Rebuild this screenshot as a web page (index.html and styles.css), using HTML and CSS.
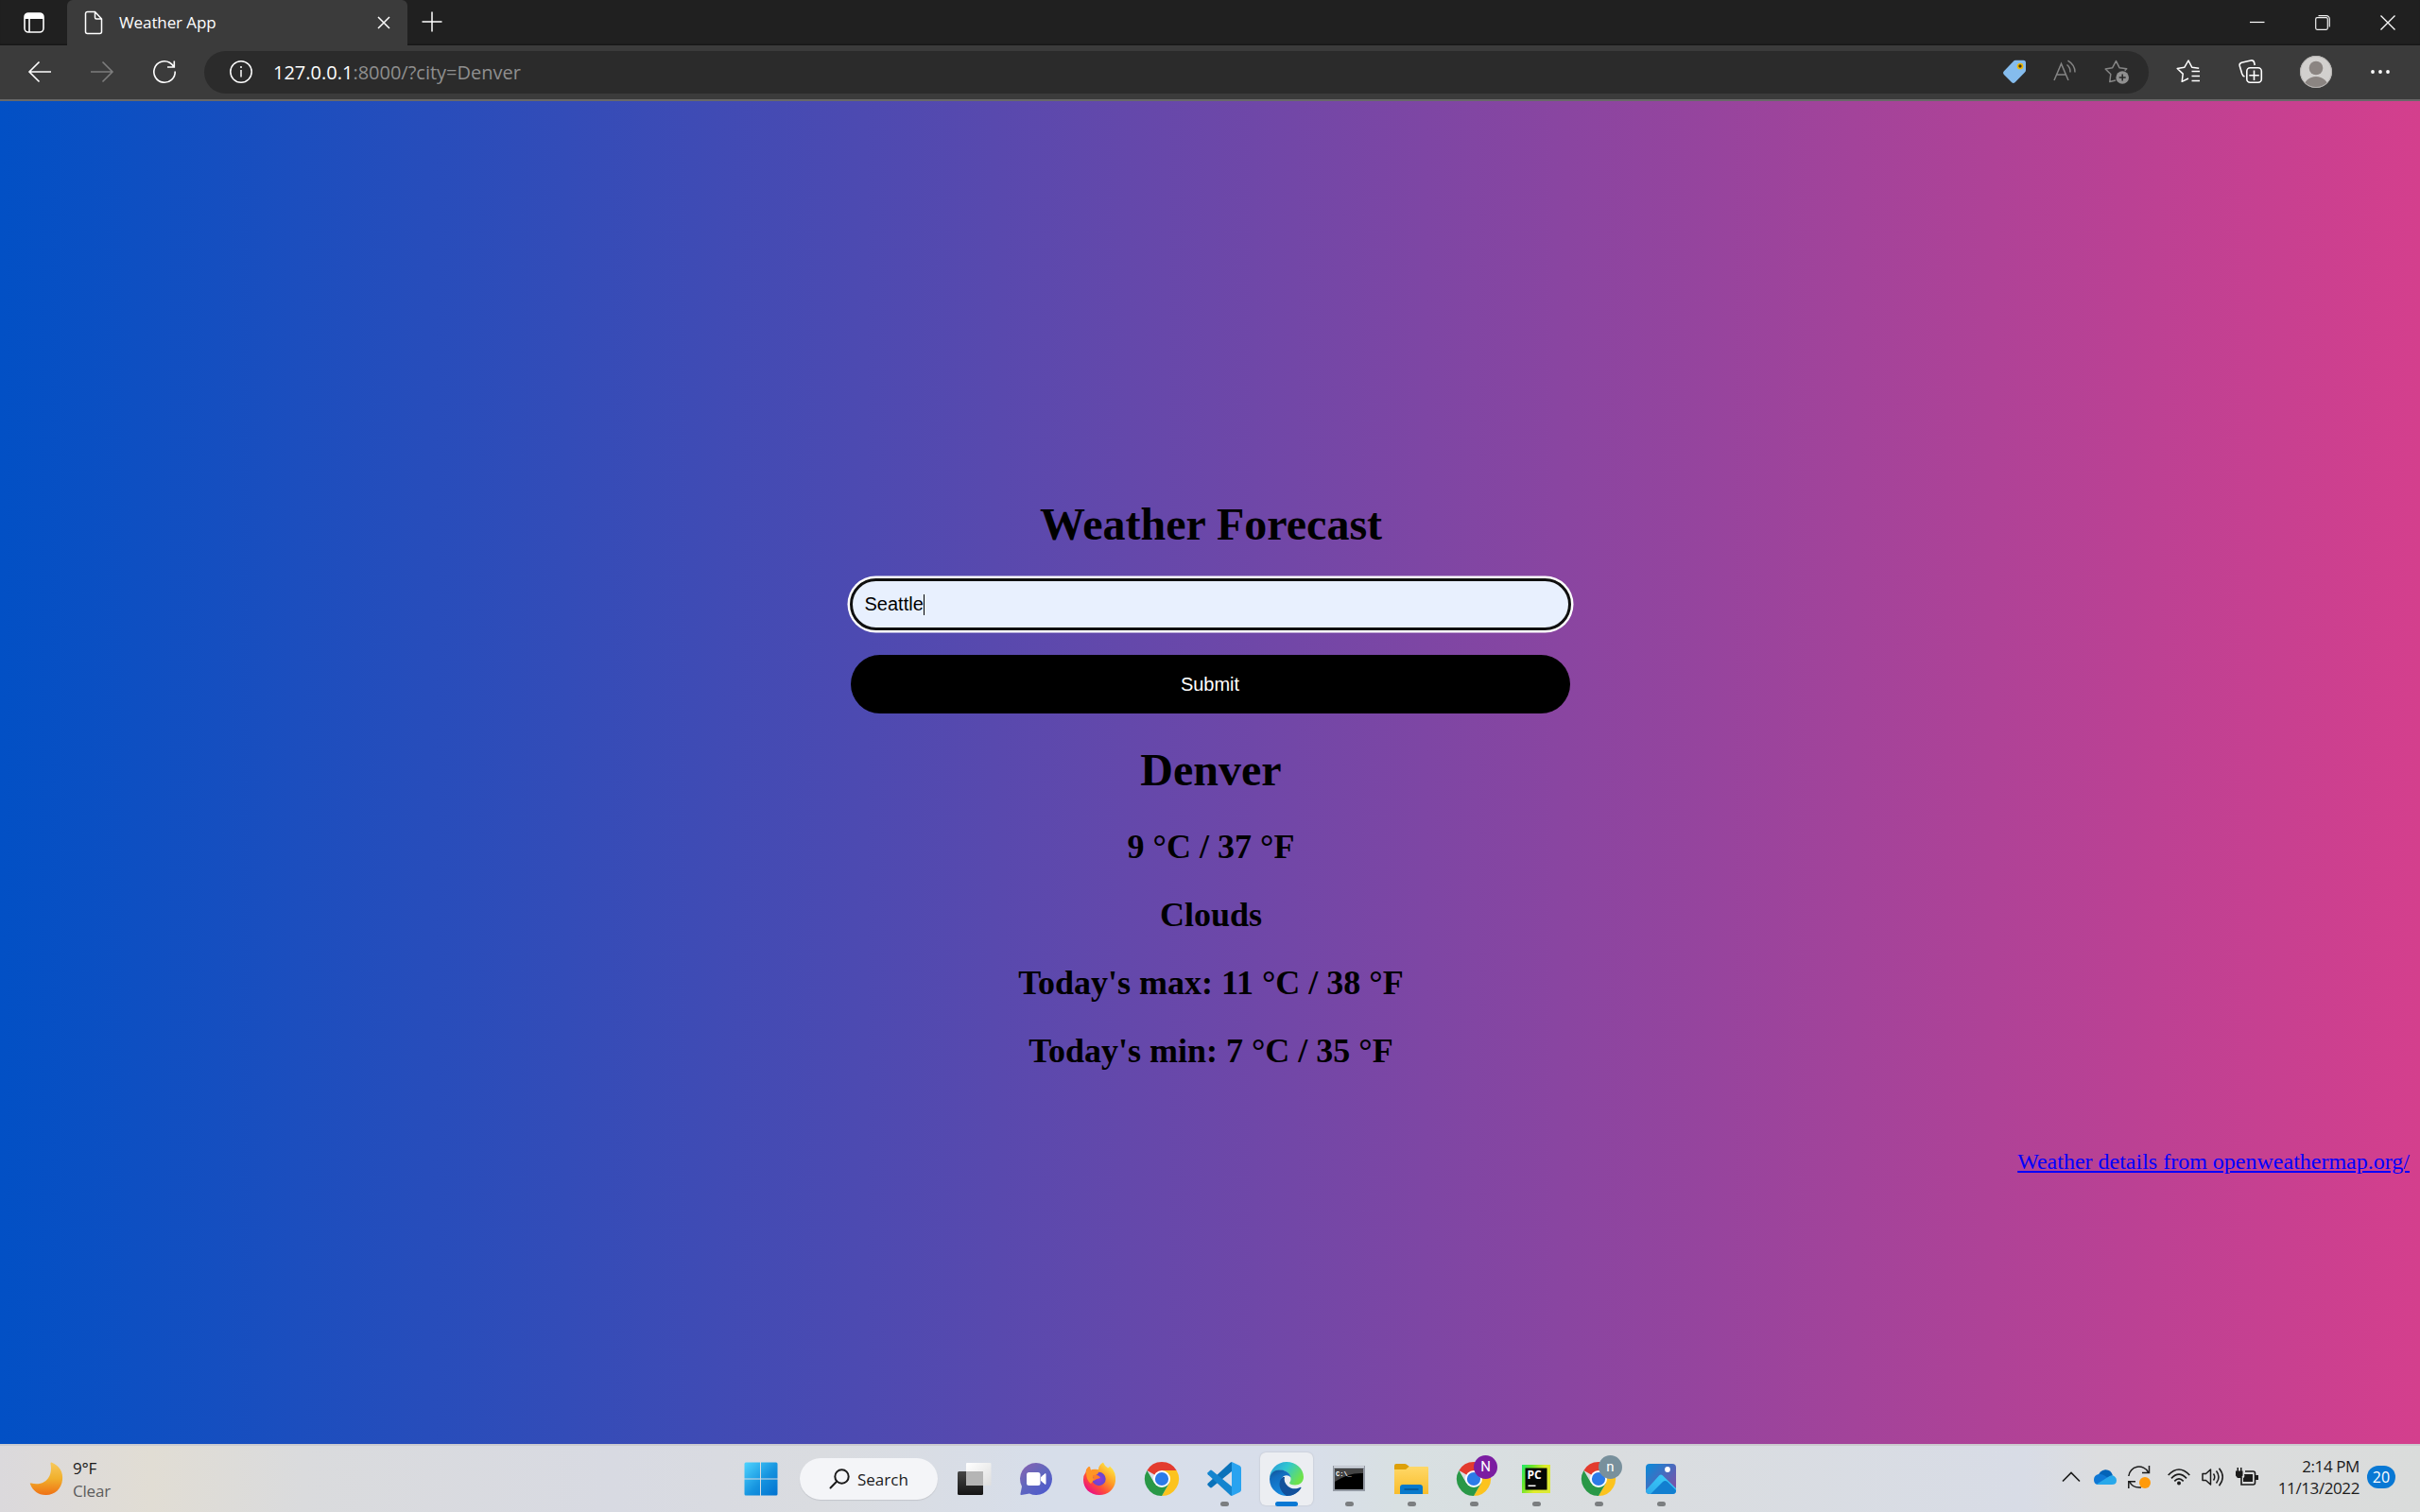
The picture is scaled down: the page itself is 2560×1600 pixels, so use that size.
FILE: index.html
```html
<!DOCTYPE html>
<html lang="en">
<head>
<meta charset="utf-8">
<title>Weather App</title>
<link rel="stylesheet" href="styles.css">
</head>
<body>
<div class="screen">
  <header class="tabstrip">
    <div class="workspaces">
      <svg width="24" height="24" viewBox="0 0 24 24" fill="none" stroke="#fff" stroke-width="1.6"><rect x="2" y="2" width="20" height="20" rx="4"/><path d="M2 8V6a4 4 0 0 1 4-4h12a4 4 0 0 1 4 4v2z" fill="#fff" stroke="none"/><path d="M7 7v15" /></svg>
    </div>
    <div class="tab">
      <svg width="20" height="26" viewBox="0 0 20 26" fill="none" stroke="#fff" stroke-width="1.5" stroke-linejoin="round"><path d="M3.5 1.5h8l7 7.500v13.500a2 2 0 0 1-2 2h-13a2 2 0 0 1-2-2v-19a2 2 0 0 1 2-2zM11.500 1.500v6a1.500 1.500 0 0 0 1.500 1.500h5.500"/></svg>
      <span class="tab-title">Weather App</span>
      <svg width="14" height="14" viewBox="0 0 14 14" stroke="#fff" stroke-width="1.5"><path d="M1 1l12 12M13 1L1 13"/></svg>
    </div>
    <svg class="newtab" width="22" height="22" viewBox="0 0 22 22" stroke="#fff" stroke-width="1.5"><path d="M11 .5v21M.5 11h21"/></svg>
    <div class="window-buttons">
      <svg width="16" height="16" viewBox="0 0 16 16" stroke="#fff" stroke-width="1.200"><path d="M0 7.500h15.500"/></svg>
      <svg width="16" height="16" viewBox="0 0 16 16" fill="none" stroke="#eee" stroke-width="1.200"><rect x=".7" y="2.700" width="12.600" height="12.600" rx="1.500"/><path d="M3.500.7h8.500a3.300 3.300 0 0 1 3.300 3.300v8.500" /></svg>
      <svg width="16" height="16" viewBox="0 0 16 16" stroke="#fff" stroke-width="1.300"><path d="M.5.5l15 15M15.500.5l-15 15"/></svg>
    </div>
  </header>

  <nav class="toolbar">
    <div class="nav-buttons">
      <svg width="24" height="24" viewBox="0 0 24 24" fill="none" stroke="#fff" stroke-width="1.600"><path d="M24 12H1M11.500 1.500L1 12l10.500 10.500"/></svg>
      <svg width="24" height="24" viewBox="0 0 24 24" fill="none" stroke="#7d7d7d" stroke-width="1.600"><path d="M0 12h23M12.500 1.500L23 12 12.500 22.500"/></svg>
      <svg width="24" height="24" viewBox="0 0 24 24" fill="none" stroke="#fff" stroke-width="1.600"><path d="M23.200 11.500A11.200 11.200 0 1 1 17.500 2.300Q20 3.800 22 6.800M22.300.5v6.500H15"/></svg>
    </div>
    <div class="address">
      <svg width="24" height="24" viewBox="0 0 24 24" fill="none" stroke="#fff" stroke-width="1.500"><circle cx="12" cy="12" r="11.200"/><path d="M12 10v7.500"/><circle cx="12" cy="7" r="1" fill="#fff" stroke="none"/></svg>
      <span class="url"><span class="host">127.0.0.1</span><span class="path">:8000/?city=Denver</span></span>
      <div class="address-icons">
        <svg width="26" height="26" viewBox="0 0 26 26"><path d="M14 .8h8.500a2.500 2.500 0 0 1 2.500 2.500v8q0 1.200-1 2.200L13.500 24.300q-1.700 1.500-3.300 0L1.700 15.800q-1.500-1.600 0-3.200L12 1.700q.8-.9 2-.9z" fill="#85bced"/><circle cx="19" cy="7" r="2.500" fill="#3b341c" stroke="#efb700" stroke-width="1.700"/></svg>
        <svg width="26" height="26" viewBox="0 0 26 26" fill="none" stroke="#858585" stroke-width="1.500"><path d="M1 22L8.500 4.500 16 22M3.800 16h9.500M14.500 5.500q3.800 3 3.500 8M15.500 1.200q7.500 4.500 7.500 12.300"/></svg>
        <svg width="26" height="26" viewBox="0 0 26 26" fill="none" stroke="#858585" stroke-width="1.500" stroke-linejoin="round"><path d="M12 22L5.800 23.500l1-8L1.200 10l7.500-1.300L12.500 1.500l3.500 7.200 7.700 1.100-2 1.800"/><circle cx="19.200" cy="19" r="6.800" fill="#909090" stroke="none"/><path d="M19.200 15.500v7M15.700 19h7" stroke="#292929"/></svg>
      </div>
    </div>
    <div class="browser-icons">
      <svg width="26" height="26" viewBox="0 0 26 26" fill="none" stroke="#fff" stroke-width="1.500" stroke-linejoin="round"><path d="M13 20.500l-6.800 3.300 1-8.200L1.200 10l7.700-1.300L13 1.500l3.700 7.200 7.500 1.100M16.500 13h8.500M16.500 18h8.500M16.500 23h8.500" transform="translate(0,-.5)"/></svg>
      <svg width="26" height="26" viewBox="0 0 26 26" fill="none" stroke="#fff" stroke-width="1.600"><path d="M6.500 18Q4.500 17.500 3.700 15L1.200 6.500q-.5-2.500 2-3.300L13 1q3-.5 3.700 2.500l.5 2.500"/><rect x="8.800" y="8.800" width="15.500" height="15.500" rx="3.500"/><path d="M16.500 11.500v10.500M11.300 16.700h10.500"/></svg>
      <svg width="34" height="34" viewBox="0 0 34 34"><defs><clipPath id="face"><circle cx="17" cy="17" r="17"/></clipPath></defs><g clip-path="url(#face)"><path fill="#d2d0ce" d="M0 0h34v34H0z"/><circle cx="17" cy="13" r="7.300" fill="#8b8582"/><ellipse cx="17" cy="34" rx="13" ry="12" fill="#8b8582"/></g><circle cx="17" cy="17" r="16.500" fill="none" stroke="#b5b3b1"/></svg>
      <svg width="20" height="6" viewBox="0 0 20 6" fill="#fff"><circle cx="2" cy="3" r="1.900"/><circle cx="10" cy="3" r="1.900"/><circle cx="18" cy="3" r="1.900"/></svg>
    </div>
  </nav>

  <main class="page">
    <h1>Weather Forecast</h1>
    <form class="search-form">
      <div class="city-input"><span>Seattle</span><i class="caret"></i></div>
      <button type="button" class="submit">Submit</button>
    </form>
    <h1 class="city">Denver</h1>
    <h2>9 °C / 37 °F</h2>
    <h2>Clouds</h2>
    <h2>Today's max: 11 °C / 38 °F</h2>
    <h2>Today's min: 7 °C / 35 °F</h2>
    <a class="credit" href="#">Weather details from openweathermap.org/</a>
  </main>

  <footer class="taskbar">
    <div class="weather">
      <svg width="36" height="36" viewBox="0 0 36 36"><defs><linearGradient id="moon" x2="0" y2="1"><stop stop-color="#f8c95c"/><stop offset=".5" stop-color="#f1b02c"/><stop offset="1" stop-color="#ef7115"/></linearGradient></defs><path d="M23.500.5C32 4 36 11 35 19c-1 10-9 16.500-18 16-7.500-.3-13-4-16-11.500Q0 22 2 22.500C14 26 25.500 18 22.500 2Q22.300 0 23.500.5z" fill="url(#moon)"/></svg>
      <div class="weather-text"><span>9°F</span><span class="muted">Clear</span></div>
    </div>

    <div class="apps">
      <div class="start">
        <svg width="36" height="36" viewBox="0 0 36 36"><defs><linearGradient id="win" x1="0" y1="0" x2="36" y2="36" gradientUnits="userSpaceOnUse"><stop stop-color="#4fd5ff"/><stop offset=".55" stop-color="#1593df"/><stop offset="1" stop-color="#0070cf"/></linearGradient></defs><path fill="url(#win)" d="M2 .5h15v17H.500V2A1.500 1.500 0 0 1 2 .5zM18 .5h16A1.500 1.500 0 0 1 35.500 2v15.500H18zM.5 18.500H17v17H2A1.500 1.500 0 0 1 .5 34zM18 18.500h17.500V34a1.500 1.500 0 0 1-1.500 1.500H18z"/></svg>
      </div>
      <div class="search">
        <svg width="22" height="22" viewBox="0 0 22 22" fill="none" stroke="#1b1b1b" stroke-width="2"><circle cx="13.500" cy="8.500" r="7.200"/><path d="M8.300 13.500L1.500 20.500" stroke-linecap="round"/></svg>
        <span>Search</span>
      </div>
      <div class="app"><svg width="36" height="36" viewBox="0 0 36 36"><defs><linearGradient id="tv" x2="0" y2="1"><stop stop-color="#464646"/><stop offset="1" stop-color="#151515"/></linearGradient><linearGradient id="tw" x2="1" y2="1"><stop stop-color="#fff"/><stop offset="1" stop-color="#dedede"/></linearGradient></defs><rect y="10" width="27" height="25" rx="1.500" fill="url(#tv)"/><rect x="9" y="1" width="26.500" height="24" rx="1" fill="url(#tw)"/><path d="M9 10h18v15H9z" fill="#b5b5b5"/></svg></div>
      <div class="app"><svg width="36" height="36" viewBox="1 0 36 36"><defs><linearGradient id="chat" x2=".8" y2="1"><stop stop-color="#8b62b0"/><stop offset=".5" stop-color="#6267bd"/><stop offset="1" stop-color="#4d59cd"/></linearGradient></defs><path d="M18 1a17 17 0 1 1-7 32.500L2.500 35q-1.500 0-1-1.500L3 26A17 17 0 0 1 18 1z" fill="url(#chat)"/><rect x="8" y="11" width="14.500" height="14" rx="2.500" fill="#fff"/><path d="M23.500 16l4.500-3.500v11l-4.500-3.500z" fill="#fff" stroke="#fff" stroke-linejoin="round"/></svg></div>
      <div class="app"><svg width="36" height="36" viewBox="0 0 36 36"><defs><linearGradient id="ff" x1=".9" y1=".1" x2=".2" y2=".95"><stop stop-color="#ffed46"/><stop offset=".4" stop-color="#ff9b25"/><stop offset=".7" stop-color="#ff4a3c"/><stop offset="1" stop-color="#e90c86"/></linearGradient><radialGradient id="fp"><stop stop-color="#9139df"/><stop offset="1" stop-color="#6748cb"/></radialGradient></defs><path d="M3.500 11Q4 7 7 5l1.500 4Q11 7 17 8 17 3.500 22 .5q1 3 5 6 2-1 2-2 7 6 6 16C34 29 27 35 18 35 8 35 1 28 1 19q0-5 2.500-8z" fill="url(#ff)"/><circle cx="17.500" cy="18" r="7.200" fill="url(#fp)"/><path d="M4 10Q5 5 8 5l1 4q3-1.500 6 0l2 2q0 2-5 4-2 2 1 3l-4 5Q4 20 4 10z" fill="#ff9525"/><path d="M11 14q6-1 8 3-5 1-7 3z" fill="#ff7c28"/></svg></div>
      <div class="app"><svg width="36" height="36" viewBox="0 0 36 36"><defs><g id="chrome"><path d="M18 18L2.400 9A18 18 0 0 1 33.600 9H18z" fill="#e33b2e"/><path d="M33.600 9A18 18 0 0 1 18 36l7.800-13.500L18 9z" fill="#fcc31e"/><path d="M2.400 9A18 18 0 0 0 18 36l7.800-13.500H10.200z" fill="#299847"/><circle cx="18" cy="18" r="9" fill="#fff"/><circle cx="18" cy="18" r="7.100" fill="#2c7be8"/></g></defs><use href="#chrome"/></svg></div>
      <div class="app open"><svg width="36" height="36" viewBox="0 0 36 36"><path d="M26 0l8.500 4Q36 5 36 6.500v23q0 1.500-1.500 2.500L26 36z" fill="#29a3f0"/><path d="M26 0v10L5 27q-1 .8-2 0l-2.300-2.200q-1-1 0-2L24.500.7z" fill="#0a72ba"/><path d="M26 36V26L5 9q-1-.8-2 0L.7 11.200q-1 1 0 2l24 22.200z" fill="#1485cf"/></svg></div>
      <div class="app open active"><svg width="36" height="36" viewBox="0 0 36 36"><defs><linearGradient id="et" x2="1" y2=".5"><stop stop-color="#2793dc"/><stop offset=".5" stop-color="#31c7cf"/><stop offset="1" stop-color="#6ee24c"/></linearGradient><linearGradient id="eb" x2=".5" y2="1"><stop stop-color="#154f91"/><stop offset=".3" stop-color="#126dbe"/><stop offset="1" stop-color="#168ce2"/></linearGradient></defs><path d="M0 18C0 8 8 0 18 0s18 7 18 16c0 5-4 8.500-9 8.500-4 0-6-1.200-6-2.300 0-.8 1.500-1.500 1.500-4C22.500 12 16 8 10 9 5 10 1 14 0 18z" fill="url(#et)"/><path d="M0 18C1 11 6 8 12 8.500c6 .5 10 4 10.500 8-2-2.500-5-3-7.500-1.500-5 3-3 12 4 16 3 2 7 2 11 0-6 7-17 6-23 1Q0 27 0 18z" fill="url(#eb)"/><path d="M14 16c-6 5-4 15 4 20 7 0 12-3 15.500-8.500.2-.8-.5-1-1.300-.6-4 2-9 2-13-1.500-3-2.700-4.200-6-3.200-9.400z" fill="#12509b"/></svg></div>
      <div class="app open"><svg width="36" height="36" viewBox="0 0 36 36"><path d="M1 4h34v27H1z" fill="#9399a3"/><path d="M2 4.500h32V6H2z" fill="#dce1e8"/><path d="M3 7h30v22H3z" fill="#000"/><path d="M3 7h30v5Q18 11 3 21z" fill="#444"/><text x="4" y="15" class="cmd">C:\_</text></svg></div>
      <div class="app open"><svg width="36" height="36" viewBox="0 0 36 36"><defs><linearGradient id="fold" x2="0" y2="1"><stop stop-color="#ffd867"/><stop offset="1" stop-color="#f9bd2b"/></linearGradient></defs><path d="M0 4q0-2 2-2h9q1.200 0 2 .8L16 5v8H0z" fill="#dda009"/><path d="M0 8h12l3.500-3H35q1 0 1 1v28H0z" fill="url(#fold)"/><path d="M6 34V27q0-3 3-3h18q3 0 3 3v7z" fill="#0879cb"/><path d="M10.500 29h15" stroke="#07528f" stroke-width="1.500"/></svg></div>
      <div class="app open"><svg width="36" height="36" viewBox="0 0 36 36"><use href="#chrome"/></svg><span class="badge purple">N</span></div>
      <div class="app open"><svg width="36" height="36" viewBox="0 0 36 36"><defs><linearGradient id="py" x2="1" y2=".45"><stop stop-color="#20e86c"/><stop offset=".3" stop-color="#63e62b"/><stop offset=".7" stop-color="#e1ec28"/><stop offset="1" stop-color="#dcea35"/></linearGradient></defs><path d="M3 3h30v30H3z" fill="url(#py)"/><path d="M6.500 6.500h23v23h-23z" fill="#050805"/><text x="8.500" y="17.500" class="pc">PC</text><path d="M9.500 24.500h8V26h-8z" fill="#fff"/></svg></div>
      <div class="app open"><svg width="36" height="36" viewBox="0 0 36 36"><use href="#chrome"/></svg><span class="badge slate">n</span></div>
      <div class="app open"><svg width="36" height="36" viewBox="0 0 36 36"><defs><linearGradient id="ph" x1=".2" x2="1" y2=".7"><stop stop-color="#1485d4"/><stop offset="1" stop-color="#7952a9"/></linearGradient><linearGradient id="pm" x1="0" y1="1" x2="1" y2="0"><stop stop-color="#2ea9eb"/><stop offset="1" stop-color="#3bd1fa"/></linearGradient><clipPath id="pclip"><rect x="2" y="2" width="32" height="32" rx="4"/></clipPath></defs><g clip-path="url(#pclip)"><path fill="url(#ph)" d="M2 2h32v32H2z"/><path d="M2 30L16 14.500q2-2 4 0L34 28v6H2z" fill="url(#pm)"/><path d="M7 34L20 21q2.500-2 5 0l9 9v4z" fill="#127fd0"/><circle cx="25" cy="8" r="2.900" fill="#fff"/></g></svg></div>
    </div>

    <div class="tray">
      <svg width="20" height="12" viewBox="0 0 20 12" fill="none" stroke="#1b1b1b" stroke-width="1.600"><path d="M1 10.500L10 1.500l9 9"/></svg>
      <svg width="24" height="16" viewBox="0 0 24 16"><path d="M4 8Q6 1 12 0.300q6-.3 8 6L12 11z" fill="#0364b8"/><path d="M0 11q0-5 5-6 3-.5 5.500 1L16 9.500 7 16H5Q0 16 0 11z" fill="#0f78d4"/><path d="M3 15.500L15 8q4-3 7-.5 2 1.500 2 4 0 4.500-5 4.500H5q-1 0-2-.5z" fill="#28a8ea"/></svg>
      <svg width="24" height="24" viewBox="0 0 24 24" fill="none" stroke="#1b1b1b" stroke-width="1.500"><path d="M.8 11A11 11 0 0 1 21.500 7M22.500 0v7.500H15M14 23Q5 24 1.500 16.500M.8 24v-7.300H8"/><circle cx="18" cy="18" r="6" fill="#ff9a0a" stroke="none"/></svg>
      <svg width="24" height="18" viewBox="0 0 24 18" fill="none" stroke="#1b1b1b" stroke-width="1.700"><path d="M.7 7Q12-5 23.300 7M4 10.300Q12 2 20 10.300M7.300 13.300Q12 8.500 16.700 13.300"/><circle cx="12" cy="15.500" r="2" fill="#1b1b1b" stroke="none"/></svg>
      <svg width="24" height="20" viewBox="0 0 24 20" fill="none" stroke="#1b1b1b" stroke-width="1.500" stroke-linejoin="round"><path d="M1 6.500h3.500L9.500 2v16l-5-4.500H1zM12.500 6.500q2.500 3.500 0 7M15.500 3.500q5 6.500 0 13M18.500.8q7.500 9.200 0 18.400"/></svg>
      <svg width="24" height="20" viewBox="0 0 24 20" fill="none" stroke="#1b1b1b" stroke-width="1.600"><path d="M10 4h8.500q2 0 2 2v10q0 2-2 2H6V10"/><path d="M9 7h9v8H8v-4q2-1 1-4zM21 8h3v5h-3zM0 3.500h7.500v5L5.500 11h-3.500L0 8.500zM1.500 0v3.500h1.500V0zM5 0v3.500h1.500V0z" fill="#1b1b1b" stroke="none"/></svg>
      <div class="clock"><span class="time">2:14 PM</span><span class="date">11/13/2022</span></div>
      <span class="count">20</span>
    </div>
  </footer>
</div>
</body>
</html>
```
FILE: styles.css
```css
* { box-sizing: border-box; }
body { margin: 0; font-family: "Open Sans", "Noto Sans", sans-serif; }
svg { display: block; flex: none; overflow: visible; }

.screen {
  width: 2560px;
  height: 1600px;
  display: flex;
  flex-direction: column;
  overflow: hidden;
}

/* Browser tabs */
.tabstrip {
  height: 48px;
  flex: none;
  display: flex;
  background: #202020;
  box-shadow: inset 0 -2px 2px -1px #151515;
}
.workspaces { width: 71px; padding: 12px 0 0 24px; }
.tab {
  width: 360px;
  padding: 0 18px;
  display: flex;
  align-items: center;
  background: #3b3b3b;
  border-radius: 6px 6px 0 0;
  color: #fff;
}
.tab-title { margin: -2px auto 0 17px; font-size: 17px; letter-spacing: -0.1px; }
.newtab { margin: 12px 0 0 15px; }
.window-buttons { margin-left: auto; padding: 16px 26px 0 0; display: flex; gap: 53px; }

/* Address bar */
.toolbar {
  height: 59px;
  flex: none;
  display: flex;
  align-items: center;
  padding-bottom: 1px;
  background: #3b3b3b;
  border-bottom: 2px solid #686868;
}
.nav-buttons { width: 216px; padding-left: 30px; display: flex; gap: 42px; }
.address {
  width: 2057px;
  height: 45px;
  padding: 0 21px 0 27px;
  display: flex;
  align-items: center;
  background: #2b2b2b;
  border-radius: 23px;
}
.url { margin-left: 22px; font-size: 20px; white-space: nowrap; }
.host { color: #fff; }
.path { color: #8f8f8f; }
.address-icons { margin-left: auto; display: flex; gap: 28px; }
.browser-icons { display: flex; align-items: center; }
.browser-icons svg:nth-child(1) { margin-left: 29px; }
.browser-icons svg:nth-child(2) { margin-left: 40px; }
.browser-icons svg:nth-child(3) { margin-left: 39px; }
.browser-icons svg:nth-child(4) { margin-left: 41px; }

/* Weather page */
.page {
  height: 1421px;
  flex: none;
  padding-top: 420px;
  display: flex;
  flex-direction: column;
  align-items: center;
  background: linear-gradient(90deg, #0250c5 0%, #d43f8d 100%);
  font-family: "Liberation Serif", serif;
  color: #000;
}
h1 { margin: 0; padding-left: 2px; font-size: 48px; line-height: 55px; }
h2 { margin: 0 0 31px; padding-left: 2px; font-size: 36px; line-height: 41px; }
.city { margin: 32px 0 34px; }
.search-form {
  width: 761px;
  margin-top: 30px;
  display: flex;
  flex-direction: column;
  gap: 26px;
  font-family: "Liberation Sans", sans-serif;
  font-size: 20px;
}
.city-input {
  height: 55px;
  margin: 0 -1px;
  padding: 0 13px;
  display: flex;
  align-items: center;
  background: #e8f0fe;
  border: 3px solid #101010;
  border-radius: 28px;
  box-shadow: 0 0 0 2.500px #fff;
}
.caret { width: 1px; height: 22px; background: #000; }
.submit {
  height: 62px;
  border: 0;
  border-radius: 31px;
  background: #000;
  color: #fff;
  font: inherit;
}
.credit {
  align-self: flex-end;
  margin: 52px 11px 0 0;
  font-size: 24px;
  line-height: 27px;
  color: #00f;
}

/* Taskbar */
.taskbar {
  height: 72px;
  flex: none;
  display: grid;
  grid-template-columns: 772px 1018px 1fr;
  background: linear-gradient(90deg, #dbd9dc 0, #e1ddd4 160px, #dadbdd 320px, #d8dae2 650px, #dadce0 870px, #d7deea 1110px, #d8deea 1380px, #d8e0e2 1480px, #dadddf 1700px, #d8dce6 2140px, #dcdddf 2220px, #dadcdb 2560px);
  border-top: 2px solid #cbcbcf;
  font-size: 17px;
  color: #1b1b1b;
}
.weather { display: flex; padding: 17px 0 0 31px; gap: 10px; }
.weather-text { display: flex; flex-direction: column; line-height: 24px; margin-top: -5px; letter-spacing: -0.2px; }
.muted { color: #5c5c5c; }
.apps { display: flex; align-items: center; }
.start { width: 74px; padding-left: 15px; }
.search {
  width: 146px;
  height: 44px;
  margin-right: 6px;
  padding-left: 31px;
  display: flex;
  align-items: center;
  gap: 8px;
  background: #f4f5f8;
  border-radius: 22px;
  box-shadow: 0 1px 1px #c3c6cc;
}
.app {
  position: relative;
  width: 56px;
  height: 56px;
  margin: 0 5px;
  display: grid;
  place-items: center;
  border-radius: 6px;
}
.active { background: #eceef2; box-shadow: 0 0 2px #b5b9c1; }
.open::after {
  content: "";
  position: absolute;
  left: 24px;
  bottom: -1px;
  width: 9px;
  height: 5px;
  border-radius: 3px;
  background: #7b7e80;
}
.active::after { left: 16px; width: 24px; background: #0878d4; }
.badge {
  position: absolute;
  left: 28px;
  top: 3px;
  width: 25px;
  height: 25px;
  border-radius: 50%;
  font: 15px/25px Roboto, sans-serif;
  text-align: center;
  color: #fff;
}
.purple { background: #7b1da1; }
.slate { background: #78909c; }
.cmd { font: bold 7px "Liberation Mono", monospace; fill: #fff; }
.pc { font: bold 12px "Open Sans", sans-serif; fill: #fff; }
.tray { display: flex; align-items: center; padding: 0 26px 4px 0; justify-content: flex-end; }
.tray svg:nth-child(2) { margin-left: 14px; }
.tray svg:nth-child(3) { margin-left: 12px; }
.tray svg:nth-child(4) { margin-left: 18px; }
.tray svg:nth-child(5), .tray svg:nth-child(6) { margin-left: 12px; }
.clock { width: 107px; display: flex; flex-direction: column; align-items: flex-end; line-height: 23px; white-space: nowrap; letter-spacing: -0.4px; }
.count {
  width: 30px;
  height: 24px;
  margin-left: 8px;
  border-radius: 12px;
  background: #0878d4;
  color: #fff;
  text-align: center;
  line-height: 24px;
  font-size: 16px;
}
```
